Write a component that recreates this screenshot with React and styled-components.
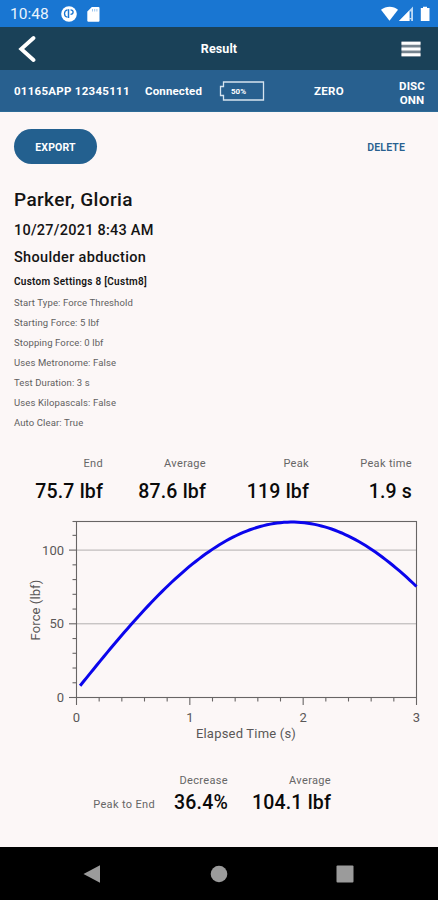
import React from 'react';
import styled, { createGlobalStyle } from 'styled-components';

const GlobalStyle = createGlobalStyle`
  * {
    box-sizing: border-box;
  }

  body {
    margin: 0;
    background: #fcf7f7;
    font-family: Roboto, "Liberation Sans", sans-serif;
  }

  button {
    margin: 0;
    padding: 0;
    border: 0;
    background: none;
    color: inherit;
    font: inherit;
  }

  svg {
    display: block;
  }
`;

const Screen = styled.div`
  display: flex;
  flex-direction: column;
  width: 438px;
  height: 900px;
  overflow: hidden;
  background: #fcf7f7;
  color: #141414;
`;

const StatusBar = styled.div`
  display: flex;
  align-items: center;
  height: 27px;
  padding: 1px 7px 0 10px;
  background: #1976d2;
  color: #eaf4fd;
`;

const Clock = styled.span`
  width: 51px;
  font-size: 15.5px;
  line-height: 24px;
`;

const StatusIcons = styled.div`
  display: flex;
  align-items: center;
  gap: ${({ $gap }) => $gap}px;
  margin-left: ${({ $end }) => ($end ? 'auto' : 0)};
`;

const TitleBar = styled.header`
  display: grid;
  grid-template-columns: 60px 1fr 60px;
  align-items: center;
  height: 43px;
  background: #1a4158;
  color: #fff;
`;

const Title = styled.h1`
  margin: 0;
  font-size: 12.5px;
  font-weight: 700;
  line-height: 16px;
  letter-spacing: 0.1px;
  text-align: center;
`;

const BackButton = styled.button`
  padding-left: 18px;
`;

const MenuButton = styled.button`
  padding-left: 23px;
`;

const DeviceBar = styled.div`
  display: flex;
  align-items: center;
  height: 42px;
  padding: 0 12px 0 14px;
  background: #28608f;
  border-bottom: 1px solid #2e6c98;
  color: #fff;
  font-size: 11.5px;
  font-weight: 700;
`;

const DeviceItem = styled.span`
  width: ${({ $width }) => $width}px;
  letter-spacing: ${({ $spacing = 0 }) => $spacing}px;
`;

const Disconnect = styled.button`
  width: 28px;
  margin-left: auto;
  padding-top: 5px;
  line-height: 14px;
  letter-spacing: 0.1px;
  text-align: center;
  word-break: break-all;
`;

const Content = styled.main`
  flex: 1;
  padding-top: 17px;
`;

const Actions = styled.div`
  display: flex;
  align-items: center;
  justify-content: space-between;
  height: 35px;
  padding: 0 33px 0 14px;
`;

const ExportButton = styled.button`
  width: 83px;
  height: 35px;
  padding-top: 2px;
  border-radius: 18px;
  background: #23608f;
  color: #fff;
  font-size: 10.5px;
  font-weight: 700;
  letter-spacing: 0.15px;
`;

const DeleteButton = styled.button`
  padding-top: 2px;
  color: #28608f;
  font-size: 10.5px;
  font-weight: 600;
  letter-spacing: 0.15px;
`;

const Summary = styled.section`
  padding: 20px 14px 0;
`;

const Patient = styled.h2`
  margin: 0;
  font-size: 19px;
  font-weight: 500;
  line-height: 32px;
  letter-spacing: 0.38px;
`;

const Heading = styled.h3`
  margin: 0;
  font-size: 14.5px;
  font-weight: 500;
  line-height: ${({ $line }) => $line}px;
  letter-spacing: ${({ $spacing = 0 }) => $spacing}px;
`;

const Settings = styled.h4`
  margin: 0;
  font-size: 10px;
  font-weight: 600;
  line-height: 22px;
  letter-spacing: 0.28px;
`;

const Detail = styled.p`
  margin: 0;
  color: #606060;
  font-size: 9.5px;
  line-height: 20.05px;
  letter-spacing: 0.12px;
`;

const Stats = styled.section`
  display: grid;
  grid-template-columns: repeat(4, 103px);
  padding-top: 23px;
`;

const Stat = styled.div`
  text-align: right;
`;

const StatLabel = styled.div`
  color: #666;
  font-size: 11px;
  line-height: 16px;
  letter-spacing: 0.34px;
`;

const StatValue = styled.div`
  color: #0a0a0a;
  font-size: 19.5px;
  font-weight: 500;
  line-height: ${({ $line = 40 }) => $line}px;
  letter-spacing: 0.18px;
`;

const ChartBox = styled.div`
  height: 250px;
`;

const Recovery = styled.section`
  display: grid;
  grid-template-columns: 155px 73px 103px;
  align-items: end;
  padding-top: 11px;
`;

const RecoveryLabel = styled(StatLabel)`
  padding-bottom: 4px;
  text-align: right;
  line-height: 16px;
`;

const NavBar = styled.nav`
  display: grid;
  grid-template-columns: 104px 1fr 104px;
  align-items: center;
  height: 53px;
  background: #000;
`;

const NavButton = styled.button`
  display: flex;
  justify-content: ${({ $align }) => $align};
`;

const details = [
  'Start Type: Force Threshold',
  'Starting Force: 5 lbf',
  'Stopping Force: 0 lbf',
  'Uses Metronome: False',
  'Test Duration: 3 s',
  'Uses Kilopascals: False',
  'Auto Clear: True',
];

const stats = [
  { label: 'End', value: '75.7 lbf' },
  { label: 'Average', value: '87.6 lbf' },
  { label: 'Peak', value: '119 lbf' },
  { label: 'Peak time', value: '1.9 s' },
];

const PLOT = { left: 76.5, right: 416.5, top: 9.5, bottom: 185.5 };
const toX = (t) => PLOT.left + (t * (PLOT.right - PLOT.left)) / 3;
const toY = (f) => PLOT.bottom - f * 1.474;

const force = (t) => 119 * Math.cos(0.805 * (t - 1.9));
const times = Array.from({ length: 100 }, (_, i) => 0.032 + (i * 2.968) / 99);
const curve = times.map((t) => `${toX(t).toFixed(2)},${toY(force(t)).toFixed(2)}`).join(' ');

const ForceChart = () => (
  <svg width="438" height="250" viewBox="0 0 438 250">
    <g stroke="#b3afaf" strokeWidth="1">
      <path d={`M${PLOT.left} ${toY(50)}H${PLOT.right}M${PLOT.left} ${toY(100)}H${PLOT.right}`} />
    </g>
    <g stroke="#686565" strokeWidth="1.1" fill="none">
      <rect x={PLOT.left} y={PLOT.top} width={PLOT.right - PLOT.left} height={PLOT.bottom - PLOT.top} />
      {Array.from({ length: 12 }, (_, i) => i * 10).map((f) => (
        <path key={f} d={`M${PLOT.left} ${toY(f)}h${f % 50 ? -4 : -7.5}`} />
      ))}
      <path d={`M${PLOT.left} ${PLOT.top}h-4`} />
      {Array.from({ length: 16 }, (_, i) => i).map((i) => (
        <path key={i} d={`M${toX(i / 5)} ${PLOT.bottom}v${i % 5 ? 4 : 7.5}`} />
      ))}
    </g>
    <polyline points={curve} fill="none" stroke="#0b05ec" strokeWidth="3" />
    <g fill="#5a5757" fontSize="13">
      {[0, 50, 100].map((f) => (
        <text key={f} x="64" y={toY(f) + 4.5} textAnchor="end">{f}</text>
      ))}
      {[0, 1, 2, 3].map((t) => (
        <text key={t} x={toX(t)} y="210" textAnchor="middle">{t}</text>
      ))}
      <text x="246" y="226" textAnchor="middle" letterSpacing=".2">Elapsed Time (s)</text>
      <text transform="translate(40 98) rotate(-90)" textAnchor="middle" letterSpacing=".1">Force (lbf)</text>
    </g>
  </svg>
);

const App = () => {
  return (
    <>
      <GlobalStyle />
      <Screen>
        <StatusBar>
          <Clock>10:48</Clock>
          <StatusIcons $gap={10}>
            <svg width="16" height="16" viewBox="0 0 16 16">
              <circle cx="8" cy="8" r="7.8" fill="#fff" />
              <path d="M6.500 3.800C2.500 4.500 2.500 10.500 6.500 11.200" fill="none" stroke="#1976d2" strokeWidth="1.300" />
              <path d="M7.500 3.200V12" stroke="#1976d2" strokeWidth="1.500" />
              <path d="M9.500 3.800C13 3.800 13 8.400 9.500 8.400" fill="none" stroke="#1976d2" strokeWidth="1.300" />
            </svg>
            <svg width="13" height="15" viewBox="0 0 13 15">
              <path d="M4.8 0H11.5Q12.5 0 12.5 1V13.5Q12.5 14.7 11.5 14.7H1.5Q.3 14.7 .3 13.5V4.5z" fill="#fff" />
              <path d="M5.5 2v2.500M7.7 2v2.500M9.9 2v2.500" stroke="#9cc5ee" />
            </svg>
          </StatusIcons>
          <StatusIcons $end>
            <svg width="51" height="16" viewBox="0 0 51 16">
              <path d="M1 3.8C6-.4 13.500-.4 18 3.800L9.500 14.800z" fill="#fff" />
              <path d="M33 .5V15H19z" fill="#bcd9f5" />
              <path d="M29 5V15H19z" fill="#fff" />
              <path d="M30.500 5.500V12M30.500 13.200V15" stroke="#1976d2" strokeWidth="1.300" />
              <path d="M43 2V.800H47V2H49.500V15H40.800V2z" fill="#fff" />
            </svg>
          </StatusIcons>
        </StatusBar>

        <TitleBar>
          <BackButton aria-label="Back">
            <svg width="18" height="28" viewBox="0 0 18 28">
              <path d="M15.500 3L3.200 14L15.500 25" fill="none" stroke="#fff" strokeWidth="3.800" strokeLinecap="round" />
            </svg>
          </BackButton>
          <Title>Result</Title>
          <MenuButton aria-label="Menu">
            <svg width="20" height="16" viewBox="0 0 20 16">
              <path d="M.5 0.500H19.500V15.500H.5z" fill="#75838e" />
              <path d="M.5 2.200H19.500M.5 8H19.500M.5 13.800H19.500" stroke="#fff" strokeWidth="3" />
            </svg>
          </MenuButton>
        </TitleBar>

        <DeviceBar>
          <DeviceItem $width={131} $spacing={0.27}>01165APP 12345111</DeviceItem>
          <DeviceItem $width={74} $spacing={0.15}>Connected</DeviceItem>
          <svg width="46" height="20" viewBox="0 0 46 20">
            <path d="M4.500 1H44.500V19H4.500V14.500H1.500V5.500H4.500z" fill="none" stroke="#d6e4ef" strokeWidth="1.300" />
            <text x="19.500" y="13.200" textAnchor="middle" fontSize="8" fontWeight="700" fill="#fff">50%</text>
          </svg>
          <DeviceItem as="button" $width={128} $spacing={0.3}>ZERO</DeviceItem>
          <Disconnect>DISCONN</Disconnect>
        </DeviceBar>

        <Content>
          <Actions>
            <ExportButton>EXPORT</ExportButton>
            <DeleteButton>DELETE</DeleteButton>
          </Actions>

          <Summary>
            <Patient>Parker, Gloria</Patient>
            <Heading $line={29} $spacing={0.24}>10/27/2021 8:43 AM</Heading>
            <Heading $line={26} $spacing={0.34}>Shoulder abduction</Heading>
            <Settings>Custom Settings 8 [Custm8]</Settings>
            {details.map((text) => (
              <Detail key={text}>{text}</Detail>
            ))}
          </Summary>

          <Stats>
            {stats.map(({ label, value }) => (
              <Stat key={label}>
                <StatLabel>{label}</StatLabel>
                <StatValue>{value}</StatValue>
              </Stat>
            ))}
          </Stats>

          <ChartBox>
            <ForceChart />
          </ChartBox>

          <Recovery>
            <RecoveryLabel>Peak to End</RecoveryLabel>
            <Stat>
              <StatLabel>Decrease</StatLabel>
              <StatValue $line={28}>36.4%</StatValue>
            </Stat>
            <Stat>
              <StatLabel>Average</StatLabel>
              <StatValue $line={28}>104.1 lbf</StatValue>
            </Stat>
          </Recovery>
        </Content>

        <NavBar>
          <NavButton $align="flex-end" aria-label="Back">
            <svg width="21" height="18" viewBox="0 0 21 18">
              <path d="M.5 9L17 .3V17.700z" fill="#9b9b9b" />
            </svg>
          </NavButton>
          <NavButton $align="center" aria-label="Home">
            <svg width="18" height="18" viewBox="0 0 18 18">
              <circle cx="9" cy="9" r="8.300" fill="#9b9b9b" />
            </svg>
          </NavButton>
          <NavButton $align="flex-start" aria-label="Recents">
            <svg width="20" height="18" viewBox="0 0 20 18">
              <rect x="2.500" y=".5" width="17" height="17" rx="1" fill="#9b9b9b" />
            </svg>
          </NavButton>
        </NavBar>
      </Screen>
    </>
  );
};

export default App;
